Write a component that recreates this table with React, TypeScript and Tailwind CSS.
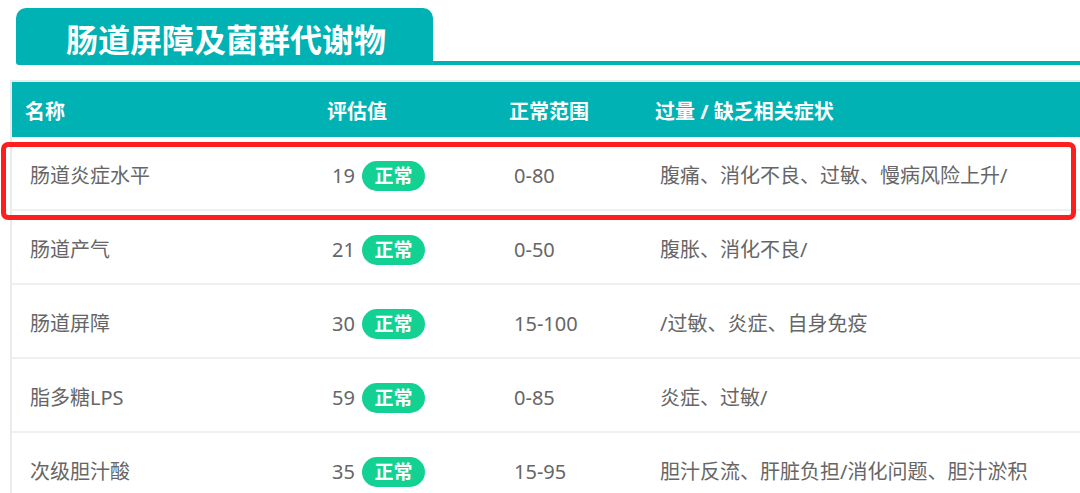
import React from 'react';

const rows = [
    { name: "肠道炎症水平", value: 19, range: "0-80", symptoms: "腹痛、消化不良、过敏、慢病风险上升/" },
    { name: "肠道产气", value: 21, range: "0-50", symptoms: "腹胀、消化不良/" },
    { name: "肠道屏障", value: 30, range: "15-100", symptoms: "/过敏、炎症、自身免疫" },
    { name: "脂多糖LPS", value: 59, range: "0-85", symptoms: "炎症、过敏/" },
    { name: "次级胆汁酸", value: 35, range: "15-95", symptoms: "胆汁反流、肝脏负担/消化问题、胆汁淤积" },
];

const font = { fontFamily: '"Noto Sans", "Noto Sans CJK SC", sans-serif' };

const App = () => {
    return (
        <div className="relative h-[493px] w-[1080px] overflow-hidden bg-white" style={font}>
            {/* title tab + rule */}
            <div className="flex items-end pt-[8px] pl-[16px]">
                <div className="flex h-[57px] w-[417px] items-center rounded-t-[10px] rounded-bl-[3px] bg-[#00b2b4] pl-[50px] pt-[6px]">
                    <span className="text-[32px] font-bold leading-none text-white">肠道屏障及菌群代谢物</span>
                </div>
                <div className="h-[4px] flex-1 bg-[#00b2b4]" />
            </div>

            <div className="ml-[10px] mt-[15px] border-l-2 border-[#e8ecec]">
                <div className="border-t-2 border-[#dfeeee]">
                    <div className="grid h-[55px] grid-cols-[302px_182px_146px_1fr] items-center bg-[#00b2b4] pl-[13px] pt-[4px] text-[20px] font-bold text-white">
                        <span>名称</span>
                        <span>评估值</span>
                        <span>正常范围</span>
                        <span>过量 / 缺乏相关症状</span>
                    </div>
                </div>
                {rows.map((row, index) => (
                    <div key={index} className="grid h-[74px] grid-cols-[302px_182px_146px_1fr] items-center border-b-2 border-[#f0f0f0] pl-[18px] pt-[6px] text-[20px] text-[#666666]">
                        <span>{row.name}</span>
                        <span className="flex items-center gap-[7px]">
                            {row.value}
                            <span className="flex h-[30px] w-[63px] items-center justify-center rounded-full bg-[#12d193] text-[19px] font-bold text-white">正常</span>
                        </span>
                        <span>{row.range}</span>
                        <span>{row.symptoms}</span>
                    </div>
                ))}
            </div>

            {/* highlight annotation */}
            <div className="absolute left-[1px] top-[142px] h-[78px] w-[1075px] rounded-[7px] border-[5px] border-[#ff1e1e]" />
        </div>
    );
};

export default App;
